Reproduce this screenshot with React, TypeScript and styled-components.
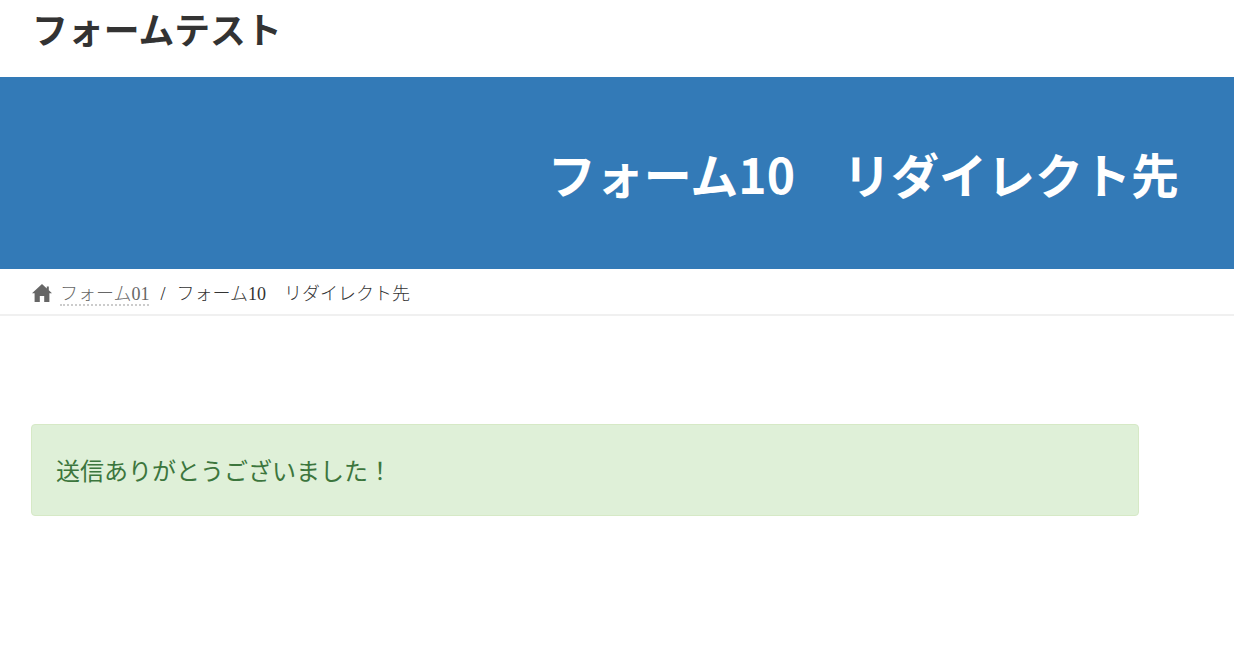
import React from 'react';
import styled, { createGlobalStyle } from 'styled-components';

const GlobalStyle = createGlobalStyle`
  html, body {
    margin: 0;
    padding: 0;
    background: #fff;
  }
`;

const JP = `"Noto Sans CJK JP", "Noto Sans", sans-serif`;
const SERIF_JP = `"Liberation Serif", "Noto Sans CJK JP", serif`;

const App: React.FC = () => (
  <Page>
    <GlobalStyle />
    <Header>
      <SiteTitle>フォームテスト</SiteTitle>
    </Header>
    <Banner>
      <BannerTitle>フォーム10　リダイレクト先</BannerTitle>
    </Banner>
    <Breadcrumb>
      <HomeIcon viewBox="0 0 20 18">
        <path d="M10 0 L14.8 4.4 L14.8 2.4 L16.8 2.4 L16.8 6.2 L20 9.2 L17.4 9.2 L17.4 18 L12.2 18 L12.2 12 L7.8 12 L7.8 18 L2.6 18 L2.6 9.2 L0 9.2 Z" />
      </HomeIcon>
      <CrumbTrail>
        <CrumbLink>フォーム01</CrumbLink>
        <Separator>/</Separator>
        <CrumbCurrent>フォーム10　リダイレクト先</CrumbCurrent>
      </CrumbTrail>
    </Breadcrumb>
    <Main>
      <Alert>送信ありがとうございました！</Alert>
    </Main>
  </Page>
);

const Page = styled.div`
  width: 1234px;
  height: 663px;
  overflow: hidden;
  background: #fff;
`;

const Header = styled.header`
  height: 77px;
  padding: 6px 0 0 32px;
  box-sizing: border-box;
`;

const SiteTitle = styled.div`
  font-family: ${JP};
  font-size: 35.84px;
  line-height: 44px;
  font-weight: 700;
  color: #333;
`;

const Banner = styled.div`
  height: 192px;
  background: #337ab7;
  display: flex;
  align-items: center;
  justify-content: flex-end;
  padding-right: 55px;
`;

const BannerTitle = styled.h1`
  margin: 0;
  font-family: ${JP};
  font-size: 48px;
  line-height: 60px;
  font-weight: 700;
  color: #fff;
  white-space: pre;
`;

const Breadcrumb = styled.nav`
  height: 47px;
  box-sizing: border-box;
  border-bottom: 2px solid #f0f0f0;
  padding: 4px 0 0 32px;
  display: flex;
  align-items: center;
  font-family: ${SERIF_JP};
  font-size: 18px;
  font-weight: 300;
  color: #333;
`;

const HomeIcon = styled.svg`
  width: 20px;
  height: 18px;
  fill: #666;
  margin: 0 8px 2px 0;
`;

const CrumbTrail = styled.div`
  line-height: 20px;
  white-space: pre;
`;

const CrumbLink = styled.span`
  color: #666;
  border-bottom: 2px dotted #ccc;
`;

const Separator = styled.span`
  margin: 0 11px 0 11px;
  color: #222;
  font-weight: 400;
`;

const CrumbCurrent = styled.span`
  white-space: pre;
`;

const Main = styled.main`
  padding: 108px 0 0 31px;
`;

const Alert = styled.div`
  width: 1108px;
  height: 92px;
  box-sizing: border-box;
  padding: 0 24px 2px;
  display: flex;
  align-items: center;
  background: #dff0d8;
  border: 1px solid #d6e9c6;
  border-radius: 4px;
  color: #3c763d;
  font-family: ${JP};
  font-size: 24px;
  font-weight: 400;
`;

export default App;
